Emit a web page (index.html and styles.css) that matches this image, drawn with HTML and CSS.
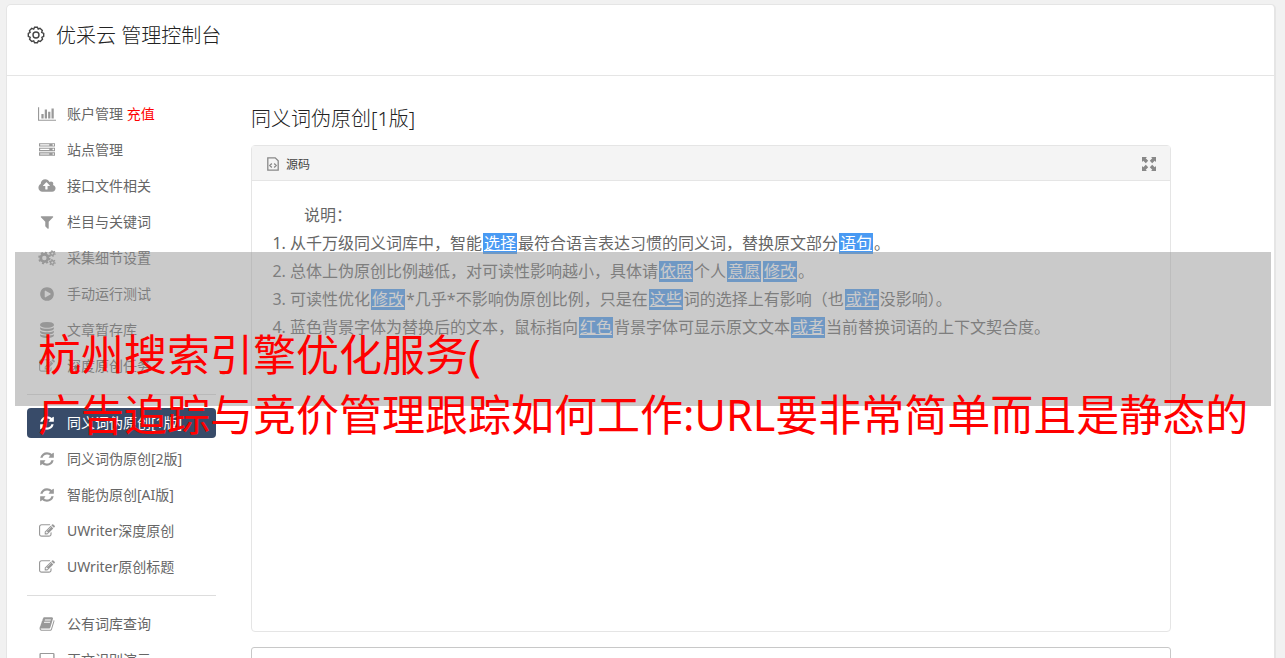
FILE: index.html
```html
<!DOCTYPE html>
<html lang="zh-CN">
<head>
  <meta charset="UTF-8" />
  <meta name="viewport" content="width=device-width, initial-scale=1" />
  <title>优采云 管理控制台</title>
  <link rel="stylesheet" href="styles.css">
</head>
<body>
  <!-- Icon set -->
  <svg class="sprite" aria-hidden="true">
    <symbol id="i-chart" viewBox="0 0 2048 1792"><path d="M640 896v512h-256v-512h256zm384-512v1024h-256v-1024h256zm1024 1152v128h-2048v-1536h128v1408h1920zm-640-896v768h-256v-768h256zm384-384v1152h-256v-1152h256z"/></symbol>
    <symbol id="i-server" viewBox="0 0 1792 1792"><path d="M128 1408h1024v-128h-1024v128zm0-512h1024v-128h-1024v128zm1568 448q0-40-28-68t-68-28-68 28-28 68 28 68 68 28 68-28 28-68zm-1568-960h1024v-128h-1024v128zm1568 448q0-40-28-68t-68-28-68 28-28 68 28 68 68 28 68-28 28-68zm0-512q0-40-28-68t-68-28-68 28-28 68 28 68 68 28 68-28 28-68zm96 832v384h-1792v-384h1792zm0-512v384h-1792v-384h1792zm0-512v384h-1792v-384h1792z"/></symbol>
    <symbol id="i-cloud" viewBox="-64 0 1920 1792"><path d="M1216 864q0-14-9-23l-352-352q-9-9-23-9t-23 9l-351 351q-10 12-10 24 0 14 9 23t23 9h224v352q0 13 9.5 22.5t22.5 9.5h192q13 0 22.5-9.5t9.5-22.5v-352h224q13 0 22.5-9.5t9.5-22.5zm640 288q0 159-112.500 271.500t-271.500 112.500h-1088q-185 0-316.500-131.500t-131.500-316.500q0-130 70-240t188-165q-2-30-2-43 0-212 150-362t362-150q156 0 285.500 87t188.500 231q71-62 166-62 106 0 181 75t75 181q0 76-41 138 130 31 213.500 135.500t83.500 238.500z"/></symbol>
    <symbol id="i-filter" viewBox="0 0 1792 1792"><path d="M1595 295q17 41-14 70l-493 493v742q0 42-39 59-13 5-25 5-27 0-45-19l-256-256q-19-19-19-45v-486l-493-493q-31-29-14-70 17-39 59-39h1280q42 0 59 39z"/></symbol>
    <symbol id="i-cogs" viewBox="0 0 20 18">
      <g fill="none" stroke="currentColor">
        <circle cx="7" cy="9" r="4" stroke-width="3"/>
        <circle cx="7" cy="9" r="6" stroke-width="2" stroke-dasharray="2.4 2.312"/>
        <circle cx="16" cy="4" r="2" stroke-width="1.600"/>
        <circle cx="16" cy="4" r="3.200" stroke-width="1.200" stroke-dasharray="1.500 1.851"/>
        <circle cx="16" cy="14" r="2" stroke-width="1.600"/>
        <circle cx="16" cy="14" r="3.200" stroke-width="1.200" stroke-dasharray="1.500 1.851"/>
      </g>
    </symbol>
    <symbol id="i-play" viewBox="0 0 1792 1792"><path d="M896 128q209 0 385.500 103t279.500 279.500 103 385.500-103 385.500-279.500 279.500-385.500 103-385.500-103-279.500-279.500-103-385.500 103-385.500 279.500-279.500 385.500-103zm384 823q32-18 32-55t-32-55l-544-320q-31-19-64-1-32 19-32 56v640q0 37 32 56 16 8 32 8 17 0 32-9z"/></symbol>
    <symbol id="i-database" viewBox="0 0 1792 1792"><path d="M896 768q237 0 443-43t325-127v170q0 69-103 128t-280 93.500-385 34.500-385-34.500-280-93.500-103-128v-170q119 84 325 127t443 43zm0 768q237 0 443-43t325-127v170q0 69-103 128t-280 93.500-385 34.500-385-34.500-280-93.500-103-128v-170q119 84 325 127t443 43zm0-384q237 0 443-43t325-127v170q0 69-103 128t-280 93.500-385 34.500-385-34.500-280-93.500-103-128v-170q119 84 325 127t443 43zm0-1152q208 0 385 34.500t280 93.500 103 128v128q0 69-103 128t-280 93.500-385 34.500-385-34.500-280-93.500-103-128v-128q0-69 103-128t280-93.500 385-34.500z"/></symbol>
    <symbol id="i-edit" viewBox="0 0 1792 1792"><path d="M888 1184l116-116-152-152-116 116v56h96v96h56zm440-720q-16-16-33 1l-350 350q-17 17-1 33t33-1l350-350q17-17 1-33zm80 594v190q0 119-84.500 203.500t-203.500 84.500h-832q-119 0-203.500-84.500t-84.500-203.500v-832q0-119 84.500-203.500t203.500-84.500h832q63 0 117 25 15 7 18 23 3 17-9 29l-49 49q-14 14-32 8-23-6-45-6h-832q-66 0-113 47t-47 113v832q0 66 47 113t113 47h832q66 0 113-47t47-113v-126q0-13 9-22l64-64q15-15 35-7t20 29zm-96-738l288 288-672 672h-288v-288zm444 132l-92 92-288-288 92-92q28-28 68-28t68 28l152 152q28 28 28 68t-28 68z"/></symbol>
    <symbol id="i-refresh" viewBox="0 0 1792 1792"><path d="M1639 1056q0 5-1 7-64 268-268 434.500t-478 166.500q-146 0-282.500-55t-243.500-157l-129 129q-19 19-45 19t-45-19-19-45v-448q0-26 19-45t45-19h448q26 0 45 19t19 45-19 45l-137 137q71 66 161 102t187 36q134 0 250-65t186-179q11-17 53-117 8-23 30-23h192q13 0 22.500 9.500t9.500 22.500zm25-800v448q0 26-19 45t-45 19h-448q-26 0-45-19t-19-45 19-45l138-138q-148-137-349-137-134 0-250 65t-186 179q-11 17-53 117-8 23-30 23h-199q-13 0-22.500-9.500t-9.500-22.500v-7q65-268 270-434.500t480-166.500q146 0 284 55.500t245 156.500l130-129q19-19 45-19t45 19 19 45z"/></symbol>
    <symbol id="i-book" viewBox="0 0 1792 1792"><path d="M1703 478q40 57 18 129l-275 906q-19 64-76.500 107.500t-122.500 43.500h-923q-77 0-148.500-53.500t-99.500-131.500q-24-67-2-127 0-4 3-27t4-37q1-8-3-21.500t-3-19.500q2-11 8-21t16.500-23.500 16.500-23.500q23-38 45-91.500t30-91.500q3-10 .5-30t-.5-28q3-11 17-28t17-23q21-36 42-92t25-90q1-9-2.500-32t.5-28q4-13 22-30.500t22-22.500q19-26 42.500-84.500t27.500-96.500q1-8-3-25.500t-2-26.500q2-8 9-18t18-23 17-21q8-12 16.500-30.500t15-35 16-36 19.500-32 26.500-23.500 36-11.500 47.500 5.500l-1 3q38-9 51-9h761q74 0 114 56t18 130l-274 906q-36 119-71.500 153.500t-128.500 34.500h-869q-27 0-38 15-11 16-1 43 24 70 144 70h923q29 0 56-15.500t35-41.500l300-987q7-22 5-57 38 15 59 43zm-1064 2q-4 13 2 22.500t20 9.500h608q13 0 25.500-9.500t16.500-22.500l21-64q4-13-2-22.500t-20-9.500h-608q-13 0-25.500 9.500t-16.500 22.500zm-83 256q-4 13 2 22.500t20 9.500h608q13 0 25.500-9.500t16.500-22.500l21-64q4-13-2-22.500t-20-9.500h-608q-13 0-25.500 9.500t-16.500 22.500z"/></symbol>
    <symbol id="i-desktop" viewBox="0 0 18 18"><path d="M2 1h14q1.500 0 1.500 1.500v10q0 1.500-1.500 1.500h-5v2h2v1h-8v-1h2v-2h-5q-1.500 0-1.500-1.500v-10q0-1.500 1.500-1.500zm0 1.300v8.700h14v-8.700z" fill-rule="evenodd"/></symbol>
  </svg>

  <div class="console">
    <header class="console-header">
      <svg class="gear" viewBox="0 0 18 18" aria-hidden="true">
        <path d="M7.600 1.300L10.400 1.300L11.200 3L13 2.300L15.300 4.400L14.700 6.300L16.700 7.400L16.700 10.400L14.900 11.300L15.500 13.200L13.300 15.500L11.400 14.800L10.400 16.700L7.600 16.700L6.700 14.900L4.800 15.500L2.600 13.300L3.200 11.400L1.300 10.400L1.300 7.400L3.100 6.500L2.500 4.600L4.700 2.400L6.700 3.100Z"/>
        <circle cx="9" cy="9" r="3"/>
      </svg>
      <h1>优采云 管理控制台</h1>
    </header>

    <div class="console-body">
      <nav class="sidebar" aria-label="管理菜单">
        <ul>
          <li><a href="#"><svg><use href="#i-chart"/></svg><span>账户管理 <b>充值</b></span></a></li>
          <li><a href="#"><svg><use href="#i-server"/></svg><span>站点管理</span></a></li>
          <li><a href="#"><svg><use href="#i-cloud"/></svg><span>接口文件相关</span></a></li>
          <li><a href="#"><svg><use href="#i-filter"/></svg><span>栏目与关键词</span></a></li>
          <li><a href="#"><svg><use href="#i-cogs"/></svg><span>采集细节设置</span></a></li>
          <li><a href="#"><svg><use href="#i-play"/></svg><span>手动运行测试</span></a></li>
          <li><a href="#"><svg><use href="#i-database"/></svg><span>文章暂存库</span></a></li>
          <li><a href="#"><svg><use href="#i-edit"/></svg><span>深度原创任务</span></a></li>
        </ul>
        <ul>
          <li><a href="#" class="active"><svg><use href="#i-refresh"/></svg><span>同义词伪原创[1版]</span></a></li>
          <li><a href="#"><svg><use href="#i-refresh"/></svg><span>同义词伪原创[2版]</span></a></li>
          <li><a href="#"><svg><use href="#i-refresh"/></svg><span>智能伪原创[AI版]</span></a></li>
          <li><a href="#"><svg><use href="#i-edit"/></svg><span>UWriter深度原创</span></a></li>
          <li><a href="#"><svg><use href="#i-edit"/></svg><span>UWriter原创标题</span></a></li>
        </ul>
        <ul>
          <li><a href="#"><svg><use href="#i-book"/></svg><span>公有词库查询</span></a></li>
          <li><a href="#"><svg><use href="#i-desktop"/></svg><span>正文识别演示</span></a></li>
        </ul>
      </nav>

      <main class="content">
        <h2>同义词伪原创[1版]</h2>
        <section class="editor">
          <div class="toolbar">
            <button type="button">
              <svg class="source-icon" viewBox="0 0 12 14" aria-hidden="true"><path d="M.8.8h7.400l3 3v9.400H.8zM4.800 6.500L2.800 8.500l2 2M7.200 6.500l2 2-2 2"/></svg>
              源码
            </button>
            <button type="button" aria-label="全屏">
              <svg class="expand-icon" viewBox="0 0 14 14" aria-hidden="true"><path d="M0 0h5L3.700 1.300 6.200 3.800 3.800 6.200 1.300 3.700 0 5zM14 0v5l-1.300-1.300L10.200 6.200 7.800 3.800l2.500-2.500L9 0zM0 14V9l1.300 1.300L3.800 7.800 6.200 10.200l-2.500 2.500L5 14zM14 14H9l1.300-1.300L7.800 10.200 10.200 7.800l2.500 2.500L14 9z"/></svg>
            </button>
          </div>
          <div class="text">
            <p>说明：</p>
            <ol>
              <li>从千万级同义词库中，智能<a href="#">选择</a>最符合语言表达习惯的同义词，替换原文部分<a href="#">语句</a>。</li>
              <li>总体上伪原创比例越低，对可读性影响越小，具体请<a href="#">依照</a>个人<a href="#">意愿</a><a href="#">修改</a>。</li>
              <li>可读性优化<a href="#">修改</a>*几乎*不影响伪原创比例，只是在<a href="#">这些</a>词的选择上有影响（也<a href="#">或许</a>没影响）。</li>
              <li>蓝色背景字体为替换后的文本，鼠标指向<a href="#">红色</a>背景字体可显示原文文本<a href="#">或者</a>当前替换词语的上下文契合度。</li>
            </ol>
          </div>
        </section>
        <textarea class="result" aria-label="结果"></textarea>
      </main>
    </div>
  </div>

  <div class="banner">
    <p>杭州搜索引擎优化服务(<br>广告追踪与竞价管理跟踪如何工作:URL要非常简单而且是静态的</p>
  </div>
</body>
</html>
```
FILE: styles.css
```css
* {
  margin: 0;
  padding: 0;
  box-sizing: border-box;
}
html {
  overflow: hidden;
}
body {
  position: relative;
  padding: 4px 9px 0 6px;
  background: #f1f1f1;
  color: #666;
  font-family: "Noto Sans", "Noto Sans CJK SC", sans-serif;
  font-size: 14px;
}
ul {
  list-style: none;
}
a {
  color: inherit;
  text-decoration: none;
}
.sprite {
  display: none;
}
.console {
  background: #fff;
  border: 1px solid #e5e5e5;
  border-right-width: 2px;
  border-radius: 5px;
}

/* header */
.console-header {
  display: flex;
  align-items: flex-start;
  gap: 11px;
  height: 71px;
  padding: 17px 20px 0;
  border-bottom: 1px solid #e5e5e5;
  color: #222;
}
.gear {
  width: 18px;
  height: 18px;
  margin-top: 4px;
  fill: none;
  stroke: #444;
  stroke-width: 1.4;
}
h1, h2 {
  font-size: 20px;
  line-height: 28px;
  font-weight: 300;
}
.console-body {
  display: flex;
  gap: 35px;
  padding: 23px 103px 20px 20px;
}

/* sidebar */
.sidebar {
  flex: 0 0 189px;
}
.sidebar ul {
  display: flex;
  flex-direction: column;
  gap: 6px;
}
.sidebar ul + ul {
  margin-top: 13px;
  padding-top: 13px;
  border-top: 1px solid #ddd;
}
.sidebar a {
  display: flex;
  align-items: center;
  gap: 11px;
  height: 30px;
  padding-left: 11px;
  border-radius: 4px;
}
.sidebar span {
  padding-bottom: 2px;
}
.sidebar svg {
  width: 18px;
  height: 16px;
  color: #999;
  fill: currentColor;
}
.sidebar b {
  color: #f00;
  font-weight: 400;
}
.sidebar .active, .sidebar .active svg {
  background: #384b69;
  color: #fff;
}

/* editor */
.content {
  flex: 1;
  min-width: 0;
}
h2 {
  margin: 6px 0 12px;
  color: #222;
}
.editor {
  border: 1px solid #e5e5e5;
  border-radius: 4px;
}
.toolbar {
  display: flex;
  justify-content: space-between;
  height: 35px;
  padding: 2px 14px 0 15px;
  background: #f4f4f4;
  border-bottom: 1px solid #e5e5e5;
}
.toolbar button {
  display: flex;
  align-items: center;
  gap: 7px;
  border: none;
  background: none;
  color: #444;
  font: inherit;
  font-size: 12px;
}
.source-icon {
  width: 12px;
  height: 14px;
  fill: none;
  stroke: #888;
  stroke-width: 1.3;
}
.expand-icon {
  width: 14px;
  height: 14px;
  fill: #888;
}
.text {
  min-height: 450px;
  padding: 20px;
  font-size: 16px;
  line-height: 28px;
}
.text p {
  text-indent: 2em;
}
.text ol {
  padding-left: 18px;
}
.text a {
  display: inline-block;
  margin: 0 1px;
  padding: 0 1px;
  background: #499af3;
  color: #fff;
  line-height: 21px;
  text-decoration: underline;
}
.result {
  display: block;
  width: 100%;
  height: 120px;
  margin-top: 15px;
  border: 1px solid #c8c8c8;
  border-radius: 3px;
  resize: none;
}

/* banner over the page */
.banner {
  position: absolute;
  top: 252px;
  left: 15px;
  right: 14px;
  height: 154px;
  padding: 73px 0 0 23px;
  background: rgba(150, 150, 150, 0.5);
  color: #f00;
  font-size: 43px;
  line-height: 60px;
  white-space: nowrap;
}
```
